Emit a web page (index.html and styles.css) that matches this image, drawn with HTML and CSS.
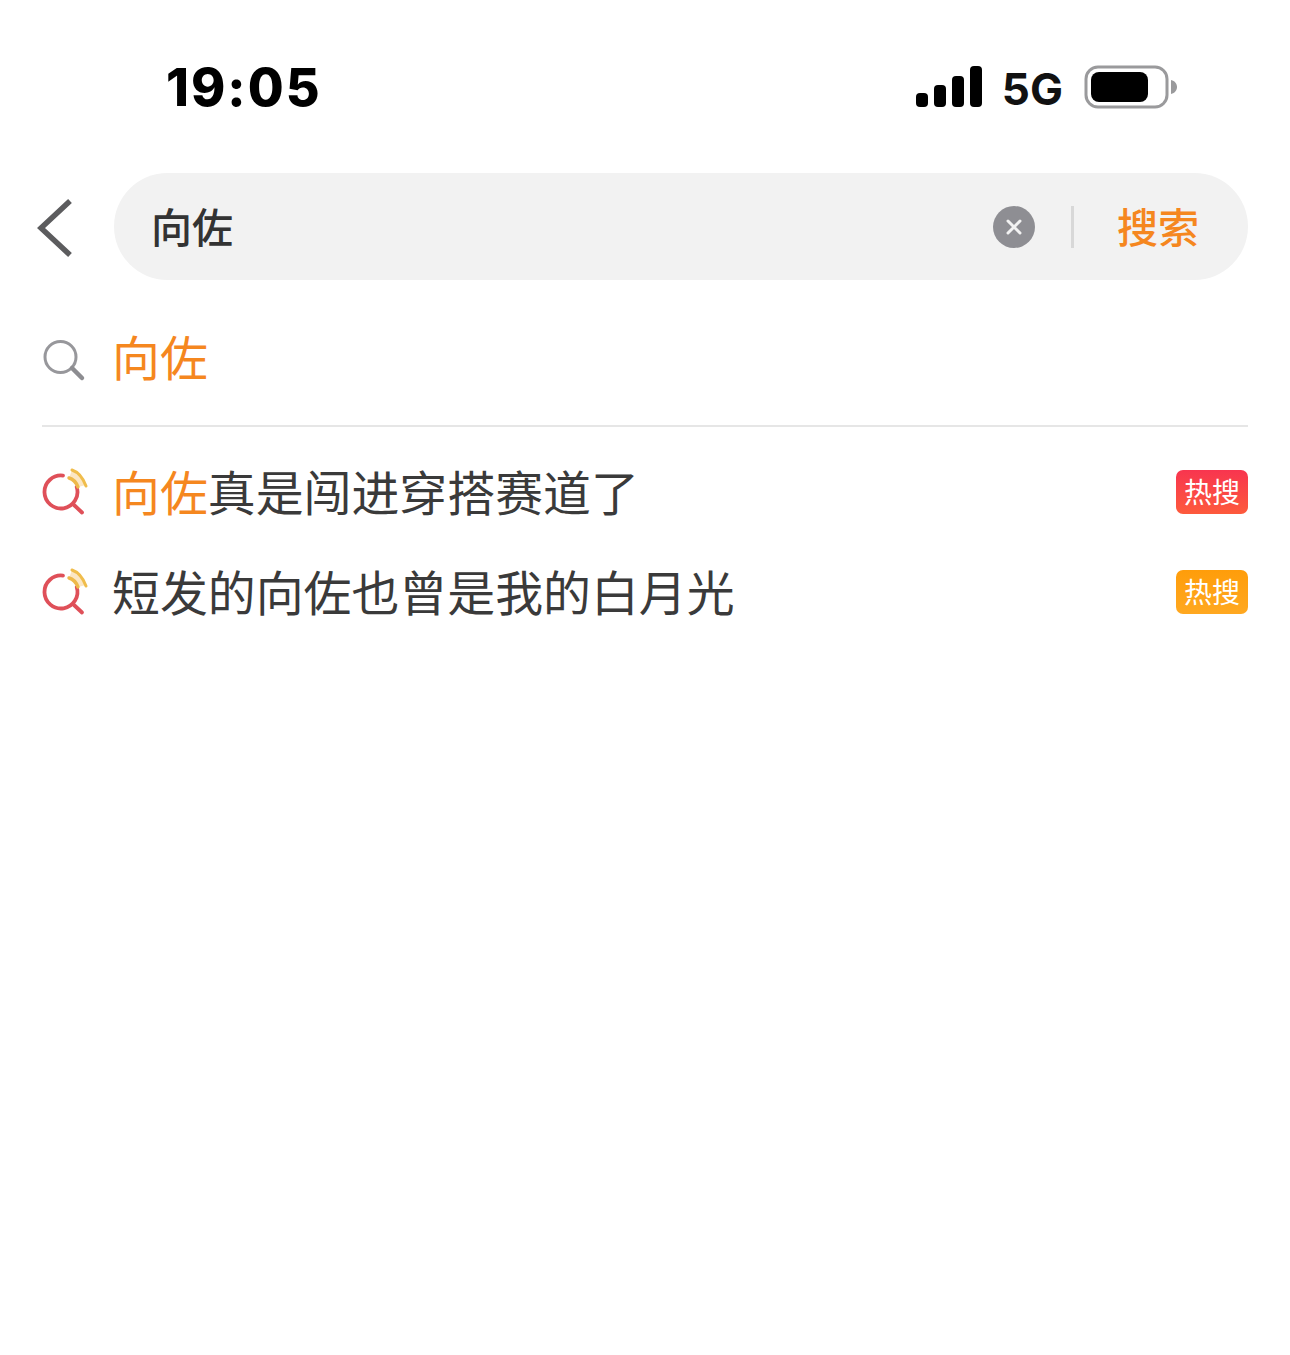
FILE: index.html
```html
<!DOCTYPE html>
<html lang="zh-CN">
<head>
<meta charset="utf-8">
<title>搜索</title>
<link rel="stylesheet" href="styles.css">
</head>
<body>
<div class="page">
  <header class="status">
    <span class="time">19:05</span>
    <div class="status-right">
      <div class="signal"><i class="b1"></i><i class="b2"></i><i class="b3"></i><i class="b4"></i></div>
      <span class="net">5G</span>
      <svg class="battery" width="94" height="44" viewBox="0 0 94 44">
        <rect x="2" y="2" width="81" height="40" rx="12" fill="none" stroke="#9a9a9c" stroke-width="3"/>
        <rect x="7" y="7" width="57" height="30" rx="8" fill="#000"/>
        <path d="M87 15c4 1 6 4 6 7s-2 6-6 7z" fill="#9a9a9c"/>
      </svg>
    </div>
  </header>

  <div class="search-row">
    <svg class="back" width="36" height="62" viewBox="0 0 36 62">
      <path d="M33 4 4 31l29 27" fill="none" stroke="#5c5c5e" stroke-width="5.500"/>
    </svg>
    <div class="search-box">
      <span class="query">向佐</span>
      <svg class="clear" width="42" height="42" viewBox="0 0 42 42">
        <circle cx="21" cy="21" r="21" fill="#8e8e93"/>
        <path d="M15 15l12 12M27 15 15 27" stroke="#f2f2f2" stroke-width="3" stroke-linecap="round"/>
      </svg>
      <span class="sep"></span>
      <span class="submit">搜索</span>
    </div>
  </div>

  <ul class="list">
    <li class="row row-plain">
      <svg class="icon icon-plain" width="46" height="46" viewBox="0 0 46 46">
        <circle cx="18.500" cy="24" r="15.500" fill="none" stroke="#97979b" stroke-width="3"/>
        <path d="M30 35l10 10" stroke="#8d8d91" stroke-width="4.500" stroke-linecap="round"/>
      </svg>
      <span class="text"><em>向佐</em></span>
    </li>
    <li class="row">
      <svg class="icon" width="46" height="46" viewBox="0 0 46 46">
        <path d="M27 9c4 1 8 5 9 9l8-2C41 9 36 3 30 1z" fill="#fbe6c4"/>
        <path d="M21 6.600A16.500 16.500 0 1 0 34.700 18" fill="none" stroke="#df5059" stroke-width="3.800" stroke-linecap="round"/>
        <path d="M32 36l8 7.500" stroke="#df5059" stroke-width="3.800" stroke-linecap="round"/>
        <path d="M27 9c4 1 7 4 9 9" fill="none" stroke="#eeb94a" stroke-width="3.400" stroke-linecap="round"/>
        <path d="M30 1c6 2 11 8 14 16" fill="none" stroke="#f0bd4c" stroke-width="3" stroke-linecap="round"/>
      </svg>
      <span class="text"><em>向佐</em>真是闯进穿搭赛道了</span>
      <span class="badge badge-red">热搜</span>
    </li>
    <li class="row">
      <svg class="icon" width="46" height="46" viewBox="0 0 46 46">
        <path d="M27 9c4 1 8 5 9 9l8-2C41 9 36 3 30 1z" fill="#fbe6c4"/>
        <path d="M21 6.600A16.500 16.500 0 1 0 34.700 18" fill="none" stroke="#df5059" stroke-width="3.800" stroke-linecap="round"/>
        <path d="M32 36l8 7.500" stroke="#df5059" stroke-width="3.800" stroke-linecap="round"/>
        <path d="M27 9c4 1 7 4 9 9" fill="none" stroke="#eeb94a" stroke-width="3.400" stroke-linecap="round"/>
        <path d="M30 1c6 2 11 8 14 16" fill="none" stroke="#f0bd4c" stroke-width="3" stroke-linecap="round"/>
      </svg>
      <span class="text">短发的向佐也曾是我的白月光</span>
      <span class="badge badge-orange">热搜</span>
    </li>
  </ul>
</div>
</body>
</html>
```
FILE: styles.css
```css
* { box-sizing: border-box; }
html, body { margin: 0; padding: 0; background: #fff; }
body { font-family: "Noto Sans CJK SC", "Liberation Sans", sans-serif; }
.page { width: 1290px; height: 1355px; overflow: hidden; }

.status { height: 173px; padding: 56px 112px 0 166px; display: flex; justify-content: space-between; align-items: flex-start; }
.time { font-family: Inter, sans-serif; font-weight: 800; font-size: 52px; line-height: 63px; color: #000; letter-spacing: 2px; }
.status-right { display: flex; align-items: center; height: 62px; }
.signal { display: flex; align-items: flex-end; gap: 6px; height: 41px; margin-right: 20px; margin-bottom: 2px; }
.signal i { display: block; width: 12px; border-radius: 4px; background: #000; }
.signal .b1 { height: 14px; }
.signal .b2 { height: 22px; }
.signal .b3 { height: 31px; }
.signal .b4 { height: 41px; }
.net { font-family: Inter, sans-serif; font-weight: 700; font-size: 44px; line-height: 50px; color: #111; margin-right: 20px; margin-top: 4px; }
.battery { display: block; margin-left: 1px; margin-bottom: 1px; }

.search-row { display: flex; align-items: center; padding: 0 42px 0 37px; }
.back { display: block; flex: none; margin-right: 41px; margin-top: 3px; }
.search-box { flex: 1; height: 107px; border-radius: 54px; background: #f2f2f2; display: flex; align-items: center; padding: 0 49px 0 37px; }
.query { flex: 1; font-size: 41px; font-weight: 500; color: #333; line-height: 56px; margin-bottom: 4px; }
.clear { display: block; flex: none; margin-right: 36px; }
.sep { display: block; width: 3px; height: 42px; background: #d8d8d8; margin-right: 43px; }
.submit { font-size: 41px; font-weight: 500; color: #f5871f; line-height: 56px; margin-bottom: 4px; }

.list { list-style: none; margin: 0; padding: 0 42px; }
.row { height: 100px; display: flex; align-items: center; }
.row-plain { height: 147px; padding-top: 6px; border-bottom: 2px solid #e6e6e6; margin-bottom: 15px; }
.icon { display: block; flex: none; margin-right: 24px; overflow: visible; }
.text { flex: 1; font-size: 47.900px; line-height: 60px; color: #3a3a3a; white-space: nowrap; margin-bottom: 5px; }
.row-plain .text { margin-bottom: 2px; }
.text em { font-style: normal; color: #f5871f; }
.badge { flex: none; width: 72px; height: 44px; border-radius: 7px; color: #fff; font-size: 28px; line-height: 42px; text-align: center; }
.badge-red { background: linear-gradient(180deg, #f8354f, #fd5a3c); }
.badge-orange { background: linear-gradient(180deg, #ff9d0a, #ffa820); }
```
